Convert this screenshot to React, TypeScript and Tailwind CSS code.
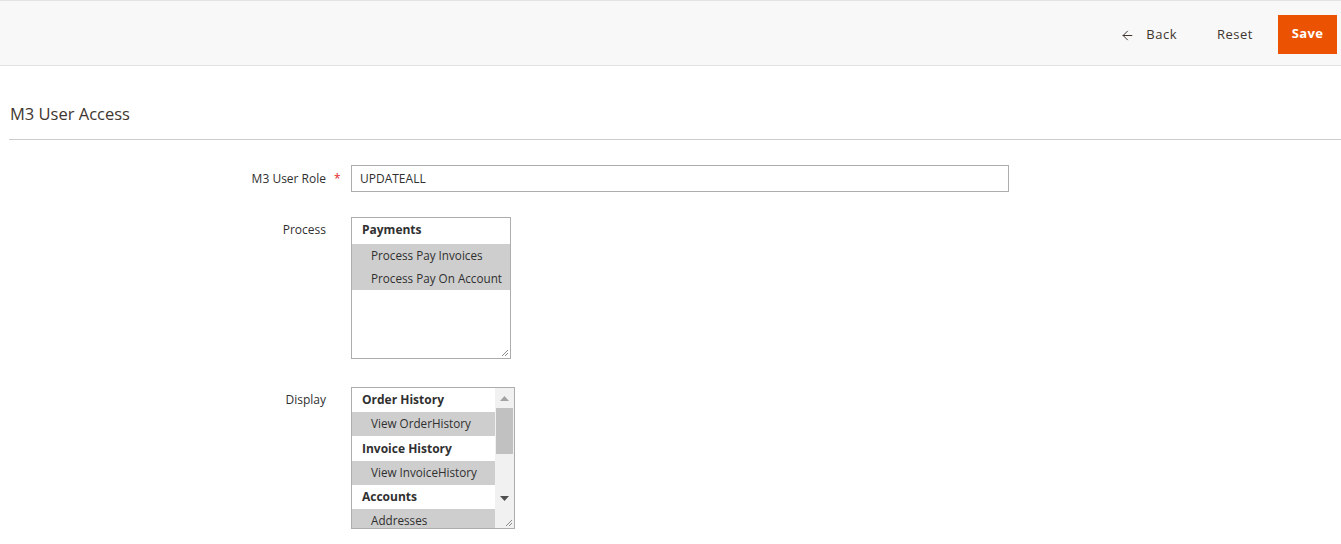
import { ArrowLeft } from "lucide-react";

type Row = { label: string; group?: boolean; selected?: boolean; tall?: boolean };

const processRows: Row[] = [
    { label: "Payments", group: true },
    { label: "Process Pay Invoices", selected: true },
    { label: "Process Pay On Account", selected: true },
];

const displayRows: Row[] = [
    { label: "Order History", group: true },
    { label: "View OrderHistory", selected: true },
    { label: "Invoice History", group: true, tall: true },
    { label: "View InvoiceHistory", selected: true },
    { label: "Accounts", group: true },
    { label: "Addresses", selected: true },
];

function Grip() {
    return (
        <svg className="absolute bottom-[1px] right-[1px]" width="9" height="9" viewBox="0 0 9 9">
            <path d="M8 2 L2 8 M8 5 L5 8" stroke="#8a8a8a" strokeWidth="1" />
        </svg>
    );
}

function ListRows({ rows, groupH, optH }: { rows: Row[]; groupH: string; optH: string }) {
    return (
        <>
            {rows.map((r, i) =>
                r.group ? (
                    <div
                        key={i}
                        className={`${r.tall ? "h-[25px]" : groupH} pl-[10px] flex items-center font-bold text-[12px] text-[#303030]`}
                    >
                        {r.label}
                    </div>
                ) : (
                    <div
                        key={i}
                        className={`${optH} pl-[19px] flex items-center text-[11.7px] text-[#303030] ${r.selected ? "bg-[#cecece]" : ""}`}
                    >
                        {r.label}
                    </div>
                )
            )}
        </>
    );
}

export default function App() {
    return (
        <div className="min-h-[544px] bg-white text-[#303030]" style={{ fontFamily: '"Open Sans", sans-serif' }}>
            <div className="h-[66px] bg-[#f8f8f8] border-t border-b border-[#e3e3e3] flex items-center justify-end pr-[4px] pt-[2px]">
                <button className="flex items-center gap-[11px] text-[13px] text-[#41362f] tracking-[0.5px] mr-[40px] pt-[2px]">
                    <ArrowLeft size={15} strokeWidth={1.6} />
                    Back
                </button>
                <button className="text-[13px] text-[#41362f] tracking-[0.5px] mr-[25px] pt-[2px]">Reset</button>
                <button className="w-[59px] h-[39px] bg-[#eb5202] text-white font-bold text-[13px] tracking-[0.3px]">
                    Save
                </button>
            </div>

            <div className="pl-[9px] pt-[36px]">
                <h2 className="pl-[1px] text-[16.5px] text-[#41362f] leading-[24px] pb-[13px] border-b border-[#cccccc]">
                    M3 User Access
                </h2>
            </div>

            <div className="pt-[25px] flex flex-col">
                <div className="flex items-center">
                    <label className="w-[326px] text-right text-[12px] text-[#303030]">M3 User Role</label>
                    <span className="w-[25px] pl-[8px] text-[#e22626] text-[12px]">*</span>
                    <div className="w-[658px] h-[27px] border border-[#adadad] pl-[8px] flex items-center text-[12px] text-[#303030]">
                        UPDATEALL
                    </div>
                </div>

                <div className="flex items-start mt-[25px]">
                    <label className="w-[326px] text-right text-[12px] pt-[4px]">Process</label>
                    <span className="w-[25px]" />
                    <div className="relative w-[160px] h-[142px] border border-[#adadad] bg-white">
                        <ListRows rows={processRows} groupH="h-[26px] pb-[3px]" optH="h-[23px]" />
                        <Grip />
                    </div>
                </div>

                <div className="flex items-start mt-[28px]">
                    <label className="w-[326px] text-right text-[12px] pt-[4px]">Display</label>
                    <span className="w-[25px]" />
                    <div className="relative w-[164px] h-[142px] border border-[#adadad] bg-white flex overflow-hidden">
                        <div className="flex-1">
                            <ListRows rows={displayRows} groupH="h-[24px]" optH="h-[24px]" />
                        </div>
                        <div className="w-[19px] bg-[#f1f1f1] flex flex-col items-center">
                            <div className="h-[20px] flex items-center justify-center">
                                <svg width="9" height="5" viewBox="0 0 9 5">
                                    <path d="M0 5 L4.5 0 L9 5 Z" fill="#a3a3a3" />
                                </svg>
                            </div>
                            <div className="w-[17px] h-[46px] bg-[#c1c1c1]" />
                            <div className="flex-1" />
                            <div className="h-[18px] flex items-center justify-center mb-[21px]">
                                <svg width="9" height="5" viewBox="0 0 9 5">
                                    <path d="M0 0 L9 0 L4.5 5 Z" fill="#505050" />
                                </svg>
                            </div>
                        </div>
                        <Grip />
                    </div>
                </div>
            </div>
        </div>
    );
}
